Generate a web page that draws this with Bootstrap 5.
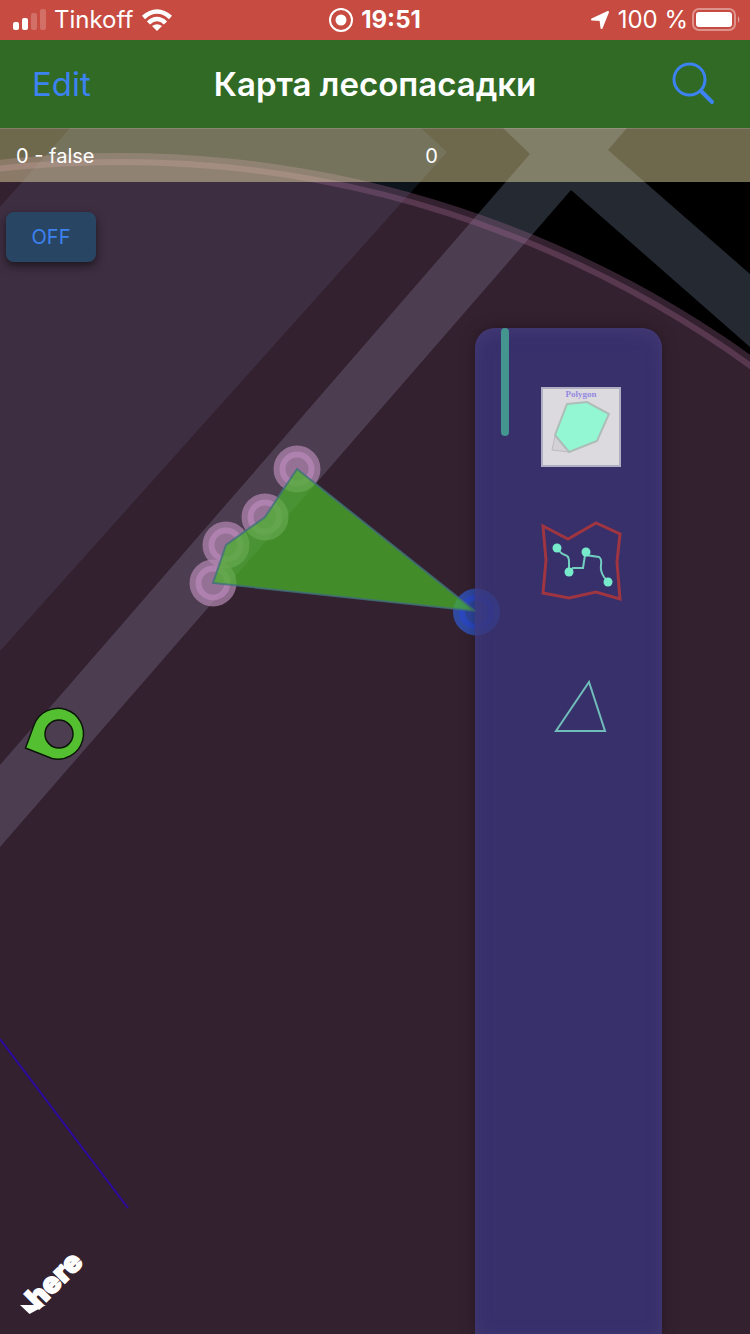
<!DOCTYPE html>
<html lang="ru">
<head>
<meta charset="utf-8">
<meta name="viewport" content="width=device-width, initial-scale=1">
<title>Карта лесопасадки</title>
<link href="https://cdn.jsdelivr.net/npm/bootstrap@5.3.0/dist/css/bootstrap.min.css" rel="stylesheet">
<style>
  body { font-family: Inter, "Liberation Sans", sans-serif; background: #000; color: #fff; }
  svg { display: block; flex: none; }
  .status-bar { background: #c74b40; height: 40px; font-size: 24px; line-height: 40px; }
  .status-bar > div { flex: 1 1 0; }
  .title-bar { background: #306a25; height: 88px; padding: 0 32px; }
  .title-bar > div { flex: 1 1 0; }
  .title-bar h1 { font-size: 33px; line-height: 44px; font-weight: 600; }
  .edit-link { font-size: 33px; line-height: 44px; color: #3c82f0; }
  .info-strip { background: rgba(255, 242, 179, .43); border-top: 1px solid rgba(255, 255, 255, .15); height: 54px; font-size: 20px; line-height: 54px; padding: 0 16px; }
  .info-state { width: 57%; }
  .toggle-btn { width: 90px; height: 50px; margin: 30px 0 0 6px; border-radius: 8px; background: #294564; color: #3c82f0; font-size: 20px; line-height: 24px; box-shadow: 0 4px 8px rgba(0, 0, 0, .5); }
  .toggle-btn:hover { background: #30507a; color: #3c82f0; }
  .tool-panel { width: 187px; margin: 146px 88px 0 auto; padding: 52px 0 0 24px; gap: 40px; border-radius: 20px 20px 0 0; background: rgba(56, 52, 122, .8); box-shadow: 0 0 16px rgba(0, 0, 0, .3), inset 0 4px 16px rgba(88, 72, 132, .4); }
  .scroll-thumb { left: 26px; top: 0; width: 8px; height: 108px; border-radius: 4px; background: #449490; }
</style>
</head>
<body class="d-flex flex-column min-vh-100">
<header>
  <div class="status-bar d-flex align-items-center ps-2 pe-2">
    <div class="d-flex align-items-center">
      <svg class="ms-1" width="34" height="24" viewBox="0 0 34 24" fill="#fff" aria-hidden="true"><rect x="1" y="14" width="6" height="8" rx="2"/><rect x="10" y="10" width="6" height="12" rx="2"/><g opacity=".2"><rect x="19" y="5" width="6" height="17" rx="2"/><rect x="28" y="1" width="6" height="21" rx="2"/></g></svg>
      <span class="ms-2">Tinkoff</span>
      <svg class="ms-2" width="32" height="24" viewBox="0 0 32 24" fill="none" stroke="#fff" stroke-width="4.500" aria-hidden="true"><path d="M2.500 9.500Q9 3.500 16 3.500T29.500 9.500M7.500 15Q11.500 11 16 11T24.500 15"/><path d="M11 18Q16 14.500 21 18L16 23Z" fill="#fff" stroke="none"/></svg>
    </div>
    <div class="d-flex align-items-center justify-content-center gap-2">
      <svg width="24" height="24" viewBox="0 0 24 24" aria-hidden="true"><circle cx="12" cy="12" r="11" fill="none" stroke="#fff" stroke-width="2"/><circle cx="12" cy="12" r="5.500" fill="#fff"/></svg>
      <span class="fw-bold">19:51</span>
    </div>
    <div class="d-flex align-items-center justify-content-end">
      <svg class="me-2" width="20" height="20" viewBox="0 0 20 20" fill="#fff" stroke="#fff" stroke-width="2" stroke-linejoin="round" aria-hidden="true"><path d="M18 2 11.500 18 10.500 10 2 9.500Z"/></svg>
      <span>100 %</span>
      <svg class="ms-1" width="50" height="24" viewBox="0 0 50 24" aria-hidden="true"><rect x="1" y="1" width="42" height="21" rx="6" fill="none" stroke="#fff" stroke-opacity=".4" stroke-width="2"/><rect x="4" y="4" width="36" height="15" rx="3" fill="#fff"/><path d="M46 8q2.500 3.500 0 7Z" fill="#fff" opacity=".5"/></svg>
    </div>
  </div>
  <nav class="title-bar d-flex align-items-center">
    <div><a href="#" class="edit-link text-decoration-none">Edit</a></div>
    <h1 class="m-0 text-nowrap">Карта лесопасадки</h1>
    <div class="d-flex justify-content-end"><button type="button" class="btn p-0 border-0" aria-label="Поиск"><svg width="46" height="44" viewBox="0 0 46 44" fill="none" stroke="#3c82f0" stroke-linecap="round" aria-hidden="true"><circle cx="17.500" cy="17.500" r="15.500" stroke-width="3"/><path d="M29 29 40 40" stroke-width="4"/></svg></button></div>
  </nav>
</header>

<main class="position-relative flex-grow-1 d-flex flex-column">
  <svg class="position-absolute top-0 start-0 w-100 h-100" viewBox="0 128 750 1206" preserveAspectRatio="xMinYMin slice" aria-label="here">
    <path d="M70 128 0 207V651L447 152 421 128Z" fill="#0d141b"/>
    <path d="M503 128 530 154 0 765V847L571 190 750 347V274L608 150 627 128Z" fill="#242932"/>
    <!-- accuracy disc and its rim -->
    <circle cx="120" cy="1238" r="1085" fill="#ad6e9d" fill-opacity=".3"/>
    <circle cx="120" cy="1238" r="1076" fill="none" stroke="#ad6e9d" stroke-opacity=".3" stroke-width="6"/>
    <path d="M0 1039 128 1208" stroke="#2c0aa0" stroke-width="2"/>
    <!-- vertices of the drawn area -->
    <g>
      <g fill="#b286b0" fill-opacity=".72"><circle cx="297" cy="469" r="23.500"/><circle cx="265" cy="517" r="23.500"/><circle cx="226" cy="545" r="23.500"/><circle cx="213" cy="583" r="23.500"/></g>
      <g fill="none" stroke="#c08cc0" stroke-opacity=".6" stroke-width="6"><circle cx="297" cy="469" r="14.500"/><circle cx="265" cy="517" r="14.500"/><circle cx="226" cy="545" r="14.500"/><circle cx="213" cy="583" r="14.500"/></g>
    </g>
    <circle cx="476.500" cy="612" r="23.500" fill="#304aa2"/>
    <circle cx="476.500" cy="612" r="14.500" fill="#2e459c" stroke="#2c48c0" stroke-width="6"/>
    <path d="M297 469 265 517 226 545 213 583 475 611Z" fill="#49b429" fill-opacity=".73" stroke="#41717c" stroke-width="2" stroke-opacity=".8"/>
    <path d="M25.500 748 34 725A25.500 25.500 0 1 1 52 758.500ZM73 734A14 14 0 1 0 45 734A14 14 0 1 0 73 734Z" fill="#55bf32" fill-rule="evenodd" stroke="#0c1608" stroke-width="1.500"/>
    <g fill="#fff">
      <path d="M20 1305H46L29.500 1314Z"/>
      <text transform="translate(38 1310) rotate(-45)" font-family="Inter, sans-serif" font-weight="900" font-size="29" stroke="#fff" stroke-width="1.500">here</text>
    </g>
  </svg>

  <div class="info-strip d-flex position-relative"><span class="info-state">0 - false</span><span>0</span></div>

  <div class="position-relative flex-grow-1 d-flex align-items-stretch">
    <button type="button" class="toggle-btn btn border-0 p-0 align-self-start">OFF</button>
    <aside class="tool-panel position-relative d-flex flex-column align-items-center" aria-label="Инструменты">
      <div class="scroll-thumb position-absolute"></div>
      <button type="button" class="btn p-0 border-0" aria-label="Полигон"><svg width="94" height="94" viewBox="0 0 94 94" aria-hidden="true"><rect x="8" y="8" width="78" height="78" fill="#dcdadf" stroke="#b0aec2" stroke-width="2"/><path d="M21 56 18 70 35 72Z" fill="#d3d1d5" stroke="#bdbbbf"/><path d="M33 24 53 22 75 34 63 61 35 72 21 55Z" fill="#92f7d2" stroke="#aebdb8" stroke-width="2"/><text x="47" y="17" text-anchor="middle" font-family="Liberation Serif, serif" font-weight="700" font-size="9" fill="#9488df">Polygon</text></svg></button>
      <button type="button" class="btn p-0 border-0" aria-label="Маршрут"><svg width="94" height="94" viewBox="0 0 94 94" fill="none" aria-hidden="true"><path d="M9 12 34 25 62 9 86 20 83 48 86 85 62 78 35 84 9 79 12 46Z" stroke="#9f3540" stroke-width="3"/><path d="M23 34Q27 40 31 41T35 47V58L39 54H49L51 41 65 43Q68 45 67 51T70 63L74 68" stroke="#72cfc0" stroke-width="2"/><g fill="#76eacb"><circle cx="23" cy="34" r="4.500"/><circle cx="35" cy="58" r="4.500"/><circle cx="52" cy="38" r="4.500"/><circle cx="74" cy="68" r="4.500"/></g></svg></button>
      <button type="button" class="btn p-0 border-0" aria-label="Треугольник"><svg width="94" height="94" viewBox="0 0 94 94" fill="none" aria-hidden="true"><path d="M55 34 22 83H71Z" stroke="#70bdb9" stroke-width="2"/></svg></button>
    </aside>
  </div>
</main>
<script src="https://cdn.jsdelivr.net/npm/bootstrap@5.3.0/dist/js/bootstrap.bundle.min.js"></script>
</body>
</html>
